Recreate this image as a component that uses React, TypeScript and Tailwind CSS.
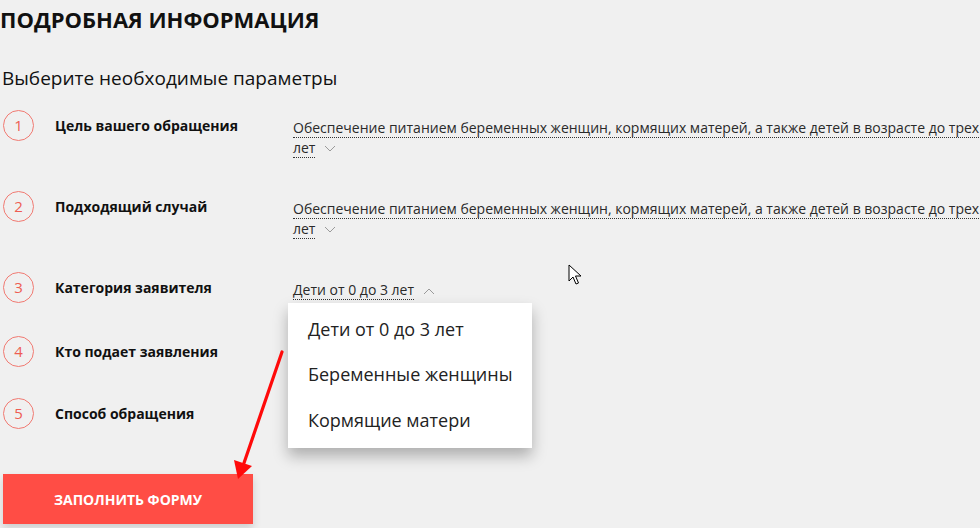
import React from "react";

const Chevron = ({ up = false }: { up?: boolean }) => (
  <svg width="12" height="8" viewBox="0 0 12 8" className="inline-block ml-[9px] align-middle" fill="none">
    <path d={up ? "M1 7 L6 2 L11 7" : "M1 1 L6 6 L11 1"} stroke="#9a9a9a" strokeWidth="1" />
  </svg>
);

const Circle = ({ n }: { n: number }) => (
  <div className="w-[31px] h-[31px] shrink-0 rounded-full border border-[#f07a72] flex items-center justify-center text-[15px] text-[#ee5d53] leading-none">
    {n}
  </div>
);

const Val = ({ children }: { children: React.ReactNode }) => (
  <span className="border-b border-dotted border-[#333] text-[#2a2a2a]">{children}</span>
);

export default function App() {
  const rows = [
    { n: 1, label: "Цель вашего обращения", h: "h-[81px]", kind: "long" },
    { n: 2, label: "Подходящий случай", h: "h-[81px]", kind: "long" },
    { n: 3, label: "Категория заявителя", h: "h-[64px]", kind: "cat" },
    { n: 4, label: "Кто подает заявления", h: "h-[62px]", kind: "none" },
    { n: 5, label: "Способ обращения", h: "h-[62px]", kind: "none" },
  ];
  return (
    <div
      className="relative w-[980px] h-[528px] overflow-hidden bg-[#f0f0f0] text-black"
      style={{ fontFamily: '"Open Sans", "Noto Sans", sans-serif' }}
    >
      <h1 className="pt-[4px] text-[22px] font-bold leading-[30px] uppercase text-[#111]">
        Подробная информация
      </h1>
      <h2 className="mt-[30px] pl-[2px] text-[19px] leading-[28px] text-[#111]">Выберите необходимые параметры</h2>
      <div className="mt-[18px] pl-[3px]">
        {rows.map((r) => (
          <div key={r.n} className={`flex items-start ${r.h}`}>
            <Circle n={r.n} />
            <div className="w-[259px] pl-[21px] pt-[6px] text-[14px] font-bold leading-[20px] text-[#111]">{r.label}</div>
            <div className="flex-1 pt-[8px] text-[14px] leading-[20px] whitespace-nowrap">
              {r.kind === "long" && (
                <>
                  <Val>Обеспечение питанием беременных женщин, кормящих матерей, а также детей в возрасте до трех</Val>
                  <br />
                  <Val>лет</Val>
                  <Chevron />
                </>
              )}
              {r.kind === "cat" && (
                <>
                  <Val>Дети от 0 до 3 лет</Val>
                  <Chevron up />
                </>
              )}
            </div>
          </div>
        ))}
      </div>
      <div className="mt-[14px] ml-[3px] w-[250px] h-[50px] bg-[#ff4d45] flex items-center justify-center text-white text-[14px] font-bold uppercase shadow-[0_4px_8px_rgba(0,0,0,0.15)]">
        Заполнить форму
      </div>

      {/* Dropdown */}
      <div className="absolute left-[288px] top-[303px] w-[244px] h-[145px] bg-white shadow-[0_8px_14px_rgba(0,0,0,0.28)] pt-[3px] text-[18px] text-[#222]">
        <div className="h-[46px] pl-[20px] flex items-center">Дети от 0 до 3 лет</div>
        <div className="h-[45px] pl-[20px] flex items-center">Беременные женщины</div>
        <div className="h-[46px] pl-[20px] flex items-center">Кормящие матери</div>
      </div>

      {/* Red arrow annotation */}
      <svg className="absolute left-0 top-0 pointer-events-none" width="980" height="528">
        <line x1="282" y1="352" x2="244" y2="463" stroke="#ff0a0a" strokeWidth="3.2" strokeLinecap="round" />
        <polygon points="238,479 234,460 252,466" fill="#ff0a0a" />
      </svg>

      {/* Mouse cursor */}
      <svg className="absolute left-[568px] top-[264px]" width="16" height="22" viewBox="0 0 16 22">
        <path d="M1 1 L1 17 L5 13 L8 20 L10.5 19 L7.5 12 L13 12 Z" fill="#fff" stroke="#000" strokeWidth="1" strokeLinejoin="round" />
      </svg>
    </div>
  );
}
